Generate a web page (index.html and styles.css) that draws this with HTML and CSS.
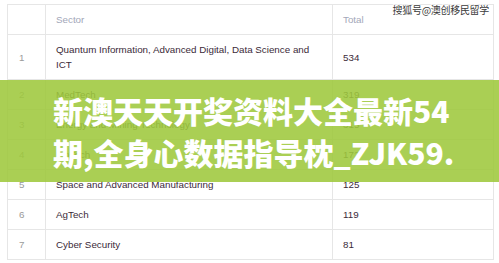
FILE: index.html
```html
<!DOCTYPE html>
<html lang="zh">
<head>
<meta charset="utf-8">
<link rel="stylesheet" href="styles.css">
</head>
<body>
<div class="page">
  <table class="sectors">
    <colgroup>
      <col class="c-num"><col class="c-sector"><col class="c-total">
    </colgroup>
    <thead>
      <tr><th></th><th>Sector</th><th>Total</th></tr>
    </thead>
    <tbody>
      <tr class="tall"><td class="num">1</td><td>Quantum Information, Advanced Digital, Data Science and ICT</td><td>534</td></tr>
      <tr><td class="num">2</td><td>MedTech</td><td>319</td></tr>
      <tr><td class="num">3</td><td>Energy and Mining Technology</td><td>315</td></tr>
      <tr><td class="num">4</td><td>FinTech</td><td>172</td></tr>
      <tr><td class="num">5</td><td>Space and Advanced Manufacturing</td><td>125</td></tr>
      <tr><td class="num">6</td><td>AgTech</td><td>119</td></tr>
      <tr><td class="num">7</td><td>Cyber Security</td><td>81</td></tr>
    </tbody>
  </table>
  <div class="watermark">搜狐号@澳创移民留学</div>
  <div class="banner">新澳天天开奖资料大全最新54<br>期,全身心数据指导枕_ZJK59.</div>
</div>
</body>
</html>
```
FILE: styles.css
```css
html, body {
  margin: 0;
  padding: 0;
  background: #ffffff;
}
.page {
  position: relative;
  width: 499px;
  height: 263px;
  overflow: hidden;
  padding: 4px 0 0 7px;
  box-sizing: border-box;
  font-family: "Liberation Sans", Arial, sans-serif;
}
.sectors {
  border-collapse: collapse;
  width: 486px;
  table-layout: fixed;
  font-size: 9.8px;
  color: #3b2a38;
}
.c-num { width: 38px; }
.c-sector { width: 287px; }
.c-total { width: 161px; }
.sectors th, .sectors td {
  border: 1px solid #e6e6e6;
  text-align: left;
  vertical-align: middle;
  padding: 0 10px;
  height: 29px;
  line-height: 15px;
}
.sectors th {
  font-weight: normal;
  color: #a3a7b9;
  height: 29px;
}
.sectors tr.tall td {
  height: 44px;
}
.sectors td.num {
  color: #9a9a9a;
  padding-left: 11px;
}
.watermark {
  position: absolute;
  top: 4px;
  right: 10px;
  font-family: "Noto Sans CJK SC", sans-serif;
  font-size: 10px;
  line-height: 12px;
  color: #3a3a3a;
  letter-spacing: -0.3px;
  text-shadow: 0 0 1px #fff, 0 0 2px #fff, 1px 1px 0 #fff, -1px -1px 0 #fff;
}
.banner {
  position: absolute;
  left: 0;
  top: 80px;
  width: 499px;
  height: 102px;
  box-sizing: border-box;
  padding: 9px 0 0 53px;
  background: rgba(158, 200, 60, 0.88);
  color: #ffffff;
  font-family: "Noto Sans CJK SC", sans-serif;
  font-weight: 900;
  font-size: 30px;
  line-height: 42px;
  white-space: nowrap;
}
```
